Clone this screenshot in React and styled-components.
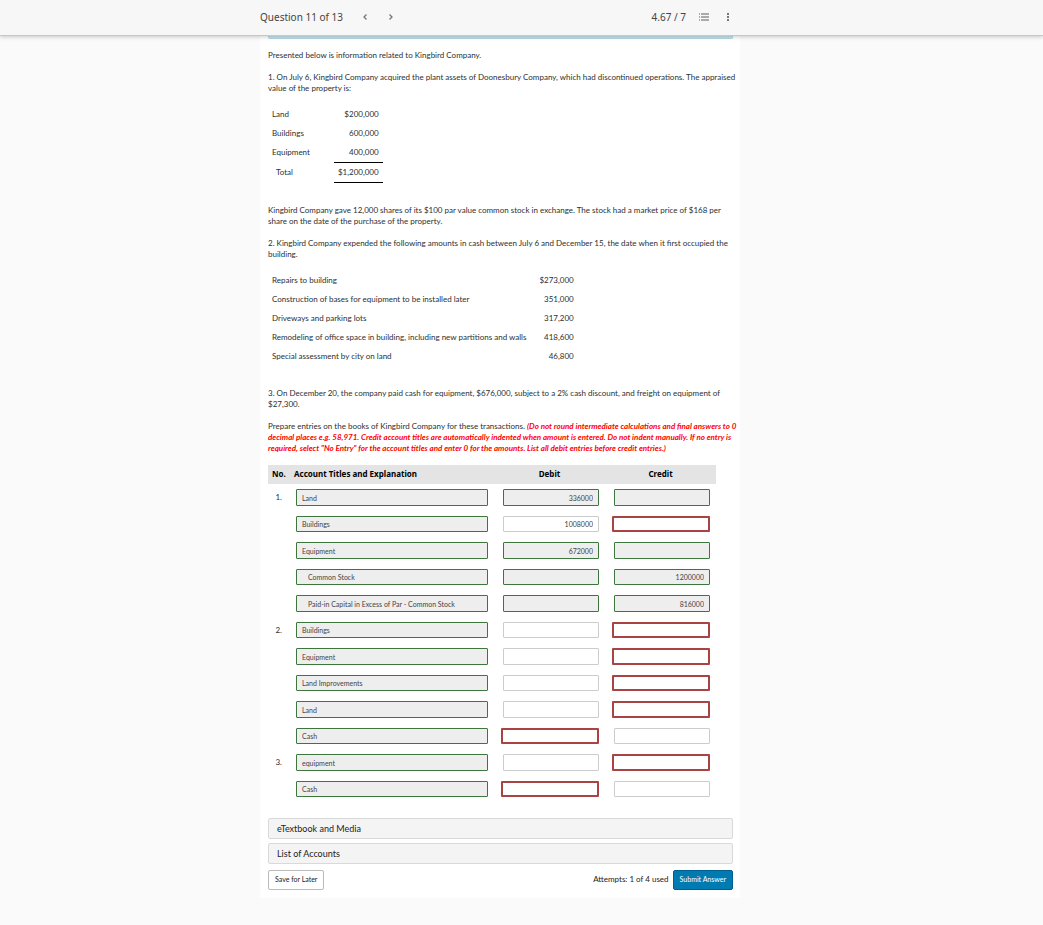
import React, { useState } from 'react';
import styled, { createGlobalStyle } from 'styled-components';

const GlobalStyle = createGlobalStyle`
    * {
        box-sizing: border-box;
    }
    body {
        margin: 0;
        background: #fafafa;
        color: #2a3033;
        font-family: Lato, "Liberation Sans", sans-serif;
        font-size: 8px;
        line-height: 11px;
    }
    button, input {
        font-family: inherit;
        margin: 0;
    }
`;

const TopBar = styled.header`
    position: sticky;
    top: 0;
    z-index: 1;
    display: flex;
    align-items: center;
    height: 36px;
    padding: 0 309px 2px 260px;
    background: #f7f7f7;
    border-bottom: 1px solid #c8c8c8;
    box-shadow: 0 1px 4px rgba(0, 0, 0, 0.2);
    font-family: "Noto Sans", "Open Sans", sans-serif;
    font-size: 10px;
    line-height: 16px;
    color: #444;
`;

const QuestionNav = styled.nav`
    display: flex;
    align-items: center;
    gap: 14px;
    margin-left: 16px;
`;

const Tools = styled.div`
    display: flex;
    align-items: center;
    gap: 12px;
    margin-left: auto;
`;

const IconButton = styled.button`
    display: flex;
    align-items: center;
    justify-content: center;
    width: 12px;
    height: 16px;
    padding: 0;
    border: 0;
    background: none;
    color: #777;
    cursor: pointer;
`;

const Content = styled.main`
    margin: 0 303px 27px 260px;
    padding: 0 7px 8px 8px;
    background: #fff;
`;

const Notice = styled.div`
    height: 3px;
    background: #c9e1ea;
    border: 1px solid #b3dae5;
    border-top: 0;
    border-radius: 0 0 2px 2px;
    margin-bottom: 11px;
`;

const Paragraph = styled.p`
    margin: 0 0 11px;
    white-space: nowrap;
`;

const Instructions = styled.em`
    display: ${props => props.$block ? 'block' : 'inline'};
    color: #f00;
    font-weight: 700;
`;

const FigureTable = styled.table`
    border-collapse: collapse;
    margin: 0 0 22px;

    th {
        font-weight: 400;
        text-align: left;
        padding: 4px ${props => props.$space} 4px 4px;
    }
    td {
        text-align: right;
        padding: 4px;
    }
`;

const AmountCell = styled.td`
    border-bottom: ${props => props.$ruled ? '1px solid #000' : '0'};
`;

const TotalLabel = styled.span`
    padding-left: 4px;
`;

const JournalTable = styled.table`
    width: 448px;
    table-layout: fixed;
    border-collapse: collapse;
    margin-bottom: 16px;
`;

const HeadCell = styled.th`
    width: ${props => props.$width};
    height: 19px;
    padding: 0 4px 2px;
    background: #e4e4e4;
    color: #000;
    font-family: "Noto Sans", "Open Sans", sans-serif;
    text-align: ${props => props.$align || 'left'};
`;

const EntryRow = styled.tr`
    input {
        height: 17px;
    }
    &:nth-child(even) input {
        height: 16px;
    }
`;

const NumberCell = styled.td`
    padding: 0 8px 0 0;
    text-align: right;
`;

const FieldCell = styled.td`
    padding: 5px 6px 5px 0;
    text-align: right;
    line-height: 0;
`;

const fieldBorders = {
    correct: '1px solid #3c763d',
    wrong: '2px solid #a94442',
    plain: '1px solid #ccc',
};

const Field = styled.input`
    width: ${props => props.$state === 'wrong' ? '98px' : '96px'};
    padding: 0 5px;
    border: ${props => fieldBorders[props.$state]};
    border-radius: 1px;
    background: ${props => props.$state === 'correct' ? '#eee' : '#fff'};
    color: #444;
    font-size: 7px;
    text-align: right;
    outline: 0;
`;

const AccountField = styled(Field)`
    width: 192px;
    padding-left: ${props => props.$indent ? '11px' : '5px'};
    text-align: left;
`;

const Panel = styled.button`
    display: block;
    width: 100%;
    height: 21px;
    margin-bottom: 4px;
    padding: 0 8px 1px;
    border: 1px solid #d9d9d9;
    border-radius: 2px;
    background: #f4f4f4;
    color: #222;
    font-size: 9px;
    text-align: left;
    cursor: pointer;
`;

const Footer = styled.footer`
    display: flex;
    align-items: center;
    gap: 4px;
    margin-top: 6px;
`;

const Attempts = styled.span`
    margin-left: auto;
    padding-bottom: 2px;
    color: #222;
`;

const ActionButton = styled.button`
    height: 20px;
    padding: 0 6px 2px;
    border: 1px solid ${props => props.$primary ? '#00608f' : '#bbb'};
    border-radius: 2px;
    background: ${props => props.$primary ? '#007bb2' : '#fff'};
    color: ${props => props.$primary ? '#fff' : '#222'};
    font-size: 7px;
    cursor: pointer;
`;

const plantAssets = [
    { label: 'Land', amount: '$200,000' },
    { label: 'Buildings', amount: '600,000' },
    { label: 'Equipment', amount: '400,000', ruled: true },
    { label: 'Total', amount: '$1,200,000', ruled: true, total: true },
];

const expenditures = [
    { label: 'Repairs to building', amount: '$273,000' },
    { label: 'Construction of bases for equipment to be installed later', amount: '351,000' },
    { label: 'Driveways and parking lots', amount: '317,200' },
    { label: 'Remodeling of office space in building, including new partitions and walls', amount: '418,600' },
    { label: 'Special assessment by city on land', amount: '46,800' },
];

const initialEntries = [
    { no: '1.', account: 'Land', debit: '336000', credit: '', states: ['correct', 'correct'] },
    { account: 'Buildings', debit: '1008000', credit: '', states: ['plain', 'wrong'] },
    { account: 'Equipment', debit: '672000', credit: '', states: ['correct', 'correct'] },
    { account: 'Common Stock', indent: true, debit: '', credit: '1200000', states: ['correct', 'correct'] },
    { account: 'Paid-in Capital in Excess of Par - Common Stock', indent: true, debit: '', credit: '816000', states: ['correct', 'correct'] },
    { no: '2.', account: 'Buildings', debit: '', credit: '', states: ['plain', 'wrong'] },
    { account: 'Equipment', debit: '', credit: '', states: ['plain', 'wrong'] },
    { account: 'Land Improvements', debit: '', credit: '', states: ['plain', 'wrong'] },
    { account: 'Land', debit: '', credit: '', states: ['plain', 'wrong'] },
    { account: 'Cash', debit: '', credit: '', states: ['wrong', 'plain'] },
    { no: '3.', account: 'equipment', debit: '', credit: '', states: ['plain', 'wrong'] },
    { account: 'Cash', debit: '', credit: '', states: ['wrong', 'plain'] },
];

const Chevron = ({ d }) => (
    <svg width="6" height="8" viewBox="0 0 6 8" fill="none" stroke="currentColor" strokeWidth="1.3">
        <path d={d} />
    </svg>
);

const ListIcon = () => (
    <svg width="10" height="8" viewBox="0 0 10 8" fill="#aaa" shapeRendering="crispEdges">
        <path d="M0 0h1v2H0zM0 3h1v2H0zM0 6h1v2H0zM2 0h8v2H2zM2 3h8v2H2zM2 6h8v2H2z" />
    </svg>
);

const MoreIcon = () => (
    <svg width="2" height="8" viewBox="0 0 2 8" fill="#777" shapeRendering="crispEdges">
        <path d="M0 0h2v2H0zM0 3h2v2H0zM0 6h2v2H0z" />
    </svg>
);

const Figures = ({ rows, space }) => (
    <FigureTable $space={space}>
        <tbody>
            {
                rows.map(row => (
                    <tr key={row.label}>
                        <th scope="row">{row.total ? <TotalLabel>{row.label}</TotalLabel> : row.label}</th>
                        <AmountCell $ruled={row.ruled}>{row.amount}</AmountCell>
                    </tr>
                ))
            }
        </tbody>
    </FigureTable>
);

const Journal = () => {
    const [entries, setEntries] = useState(initialEntries);
    const updateEntry = (index, key, value) => {
        setEntries(entries.map((entry, i) => i === index ? { ...entry, [key]: value } : entry));
    };
    return (
        <JournalTable>
            <thead>
                <tr>
                    <HeadCell scope="col" $width="22px">No.</HeadCell>
                    <HeadCell scope="col" $width="204px">Account Titles and Explanation</HeadCell>
                    <HeadCell scope="col" $width="111px" $align="center">Debit</HeadCell>
                    <HeadCell scope="col" $width="111px" $align="center">Credit</HeadCell>
                </tr>
            </thead>
            <tbody>
                {
                    entries.map((entry, index) => (
                        <EntryRow key={index}>
                            <NumberCell>{entry.no}</NumberCell>
                            <FieldCell>
                                <AccountField
                                    aria-label={`Account title ${index + 1}`}
                                    $state="correct"
                                    $indent={entry.indent}
                                    value={entry.account}
                                    readOnly
                                />
                            </FieldCell>
                            {
                                ['debit', 'credit'].map((side, i) => (
                                    <FieldCell key={side}>
                                        <Field
                                            aria-label={`${side} ${index + 1}`}
                                            $state={entry.states[i]}
                                            value={entry[side]}
                                            readOnly={entry.states[i] === 'correct'}
                                            onChange={e => updateEntry(index, side, e.target.value)}
                                        />
                                    </FieldCell>
                                ))
                            }
                        </EntryRow>
                    ))
                }
            </tbody>
        </JournalTable>
    );
};

const App = () => (
    <>
        <GlobalStyle />
        <TopBar>
            <span>Question 11 of 13</span>
            <QuestionNav>
                <IconButton aria-label="Previous question"><Chevron d="M4.5 1.5L2 4l2.5 2.5" /></IconButton>
                <IconButton aria-label="Next question"><Chevron d="M1.5 1.5L4 4 1.5 6.5" /></IconButton>
            </QuestionNav>
            <Tools>
                <span>4.67 / 7</span>
                <IconButton aria-label="Question list"><ListIcon /></IconButton>
                <IconButton aria-label="More options"><MoreIcon /></IconButton>
            </Tools>
        </TopBar>
        <Content>
            <Notice />
            <Paragraph>Presented below is information related to Kingbird Company.</Paragraph>
            <Paragraph>
                1. On July 6, Kingbird Company acquired the plant assets of Doonesbury Company, which had
                discontinued operations. The appraised<br />
                value of the property is:
            </Paragraph>
            <Figures rows={plantAssets} space="24px" />
            <Paragraph>
                Kingbird Company gave 12,000 shares of its $100 par value common stock in exchange. The stock had
                a market price of $168 per<br />
                share on the date of the purchase of the property.
            </Paragraph>
            <Paragraph>
                2. Kingbird Company expended the following amounts in cash between July 6 and December 15, the
                date when it first occupied the<br />
                building.
            </Paragraph>
            <Figures rows={expenditures} space="9px" />
            <Paragraph>
                3. On December 20, the company paid cash for equipment, $676,000, subject to a 2% cash discount,
                and freight on equipment of<br />
                $27,300.
            </Paragraph>
            <Paragraph>
                Prepare entries on the books of Kingbird Company for these transactions.{' '}
                <Instructions>
                    (Do not round intermediate calculations and final answers to 0
                </Instructions>
                <Instructions $block>
                    decimal places e.g. 58,971. Credit account titles are automatically indented when amount is
                    entered. Do not indent manually. If no entry is<br />
                    required, select "No Entry" for the account titles and enter 0 for the amounts. List all
                    debit entries before credit entries.)
                </Instructions>
            </Paragraph>
            <Journal />
            <Panel>eTextbook and Media</Panel>
            <Panel>List of Accounts</Panel>
            <Footer>
                <ActionButton>Save for Later</ActionButton>
                <Attempts>Attempts: 1 of 4 used</Attempts>
                <ActionButton $primary>Submit Answer</ActionButton>
            </Footer>
        </Content>
    </>
);

export default App;
